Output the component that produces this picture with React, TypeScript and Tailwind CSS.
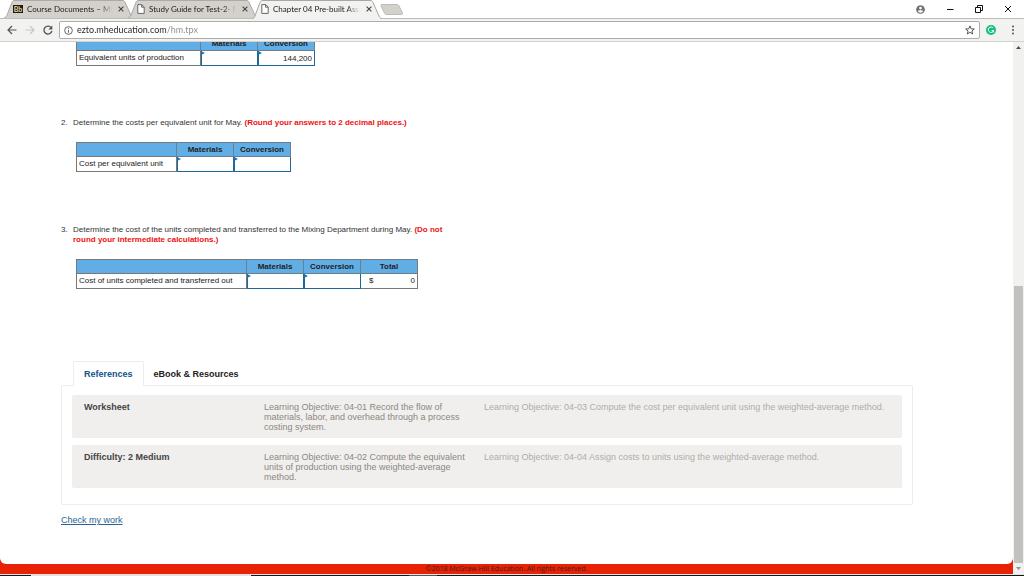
import type { ReactNode } from "react";

type TabProps = { title: string; active?: boolean; logo?: boolean };

function PageIcon() {
  return (
    <svg viewBox="0 0 8 10" className="h-2.5 w-2" fill="#fff" stroke="#666" strokeWidth="1">
      <path d="M.8.6h4l2.4 2.4v6.4H.8z" />
      <path d="M4.6.8v2.4H7" fill="none" />
    </svg>
  );
}

function BlackboardIcon() {
  return (
    <span className="flex h-2 w-2.5 items-center justify-center bg-[#1d1a14] text-[7px] leading-none font-bold text-[#e8d9a8]">
      Bb
    </span>
  );
}

function BrowserTab({ title, active, logo }: TabProps) {
  return (
    <div className={active ? "relative z-10 -mb-px h-[19px] w-[130px]" : "relative h-[18px] w-[130px]"}>
      <svg viewBox="0 0 130 19" preserveAspectRatio="none" className="absolute inset-0 h-full w-full">
        <path
          d="M0 19C2 18.500 2.500 17 3 16L8 2.500C8.500 1 9 .5 11 .5H118C120 .5 120.500 1 121 2.500L127 16C127.500 17 128 18.500 130 19"
          fill={active ? "#f2f2f1" : "#d4d0cb"}
          stroke="#a9a7a4"
        />
      </svg>
      <div className="relative flex h-[18px] items-center gap-1 pr-2 pl-[9px]">
        {logo ? <BlackboardIcon /> : <PageIcon />}
        <button
          type="button"
          className="min-w-0 flex-1 overflow-hidden text-left whitespace-nowrap text-[#222] [mask-image:linear-gradient(90deg,#000_85%,transparent)]"
        >
          {title}
        </button>
        <button type="button" aria-label="Close tab" className="flex w-2.5 justify-center">
          <svg viewBox="0 0 6 6" className="h-1.5 w-1.5" stroke="#444" strokeWidth="1.1">
            <path d="M.6.6l4.8 4.8M5.4.6L.6 5.4" />
          </svg>
        </button>
      </div>
    </div>
  );
}

function TitleBar() {
  return (
    <header className="flex h-[19px] shrink-0 items-center justify-between border-b border-[#bdbcba] bg-white">
      <div className="flex items-end self-stretch -space-x-1.5 pl-1">
        <BrowserTab title="Course Documents – MH" logo />
        <BrowserTab title="Study Guide for Test-2- M" />
        <BrowserTab title="Chapter 04 Pre-built Assi" active />
        <button type="button" aria-label="New tab" className="self-center pl-1">
          <svg viewBox="0 0 23 11" className="h-[11px] w-[23px]">
            <path d="M2 .5H17c1 0 1.500.5 2 1.500L22.500 9c.3 1 0 1.500-1 1.500H7c-1.500 0-2-.5-2.500-1.500L1 2C.7 1 1 .5 2 .5z" fill="#d4d0cb" stroke="#bebbb7" />
          </svg>
        </button>
      </div>
      <div className="flex items-center gap-[21px] pr-3">
        <button type="button" aria-label="Profile">
          <svg viewBox="0 0 10 10" className="h-[9px] w-[9px]">
            <circle cx="5" cy="5" r="4.800" fill="#707070" />
            <circle cx="5" cy="3.400" r="1.500" fill="#fff" />
            <path d="M2 7c.4-1.500 5.600-1.500 6 0-1.400 2-4.600 2-6 0z" fill="#fff" />
          </svg>
        </button>
        <button type="button" aria-label="Minimize">
          <svg viewBox="0 0 8 8" className="h-2 w-2" fill="none" stroke="#111">
            <path d="M1 4.500h6.500" />
          </svg>
        </button>
        <button type="button" aria-label="Restore">
          <svg viewBox="0 0 8 8" className="h-2 w-2" fill="none" stroke="#111">
            <path d="M.5 2.500h5v5h-5zM2.500 2.500V.5h5v5H6" />
          </svg>
        </button>
        <button type="button" aria-label="Close">
          <svg viewBox="0 0 8 8" className="h-2 w-2" fill="none" stroke="#111">
            <path d="M1 1l6 6M7 1L1 7" />
          </svg>
        </button>
      </div>
    </header>
  );
}

function Toolbar() {
  return (
    <nav className="flex h-[23px] shrink-0 items-center border-b border-[#d3d2d1] bg-[#f2f2f1] pr-2 pl-[7px]">
      <div className="flex w-[52px] items-center gap-2">
        <button type="button" aria-label="Back">
          <svg viewBox="0 0 10 10" className="h-2.5 w-2.5" fill="none" stroke="#555" strokeWidth="1.200">
            <path d="M9.500 5H1M5 1L1 5l4 4" />
          </svg>
        </button>
        <button type="button" aria-label="Forward">
          <svg viewBox="0 0 10 10" className="h-2.5 w-2.5" fill="none" stroke="#c8c8c8" strokeWidth="1.200">
            <path d="M.5 5H9M5 1l4 4-4 4" />
          </svg>
        </button>
        <button type="button" aria-label="Reload">
          <svg viewBox="0 0 10 10" className="h-2.5 w-2.5" fill="none" stroke="#555" strokeWidth="1.300">
            <path d="M8.200 2.600A4 4 0 1 0 8.900 6" />
            <path d="M9.300.5v4H5.400z" fill="#555" stroke="none" />
          </svg>
        </button>
      </div>
      <div className="flex h-[18px] min-w-0 flex-1 items-center gap-1 rounded-xs border border-[#adadad] bg-white px-1">
        <svg viewBox="0 0 10 10" className="h-[9px] w-[9px]" fill="none" stroke="#555">
          <circle cx="5" cy="5" r="4.300" />
          <path d="M5 4.400V7.600M5 2.300v1.100" />
        </svg>
        <input
          aria-label="Address"
          defaultValue="ezto.mheducation.com/hm.tpx"
          className="min-w-0 flex-1 bg-[linear-gradient(90deg,#222_90px,#8a8a8a_90px)] bg-clip-text text-[9px] text-transparent outline-none"
        />
        <button type="button" aria-label="Bookmark">
          <svg viewBox="0 0 10 10" className="h-2.5 w-2.5" fill="none" stroke="#444" strokeWidth=".9">
            <path d="M5 .9l1.200 2.900 3.100.2-2.400 2 .8 3L5 7.300 2.300 9l.8-3-2.400-2 3.100-.2z" />
          </svg>
        </button>
      </div>
      <div className="flex items-center gap-3.5 pl-1.5">
        <button type="button" aria-label="Grammar check">
          <svg viewBox="0 0 10 10" className="h-2.5 w-2.5" fill="none" stroke="#fff" strokeWidth="1">
            <circle cx="5" cy="5" r="5" fill="#10bf7a" stroke="none" />
            <path d="M7.200 3.200A2.700 2.700 0 1 0 7.600 5.500M5.600 5.500H7.600V7.500" />
          </svg>
        </button>
        <button type="button" aria-label="Menu">
          <svg viewBox="0 0 6 10" className="h-2.5 w-1.5" fill="#555">
            <circle cx="3" cy="1.500" r="1" />
            <circle cx="3" cy="5" r="1" />
            <circle cx="3" cy="8.500" r="1" />
          </svg>
        </button>
      </div>
    </nav>
  );
}

type SheetProps = { label: string; labelWidth: string; values?: string[]; total?: string; id: string };

function Sheet({ label, labelWidth, values = ["", ""], total, id }: SheetProps) {
  const columns = ["Materials", "Conversion"];
  return (
    <table className="ml-[15px] table-fixed border-collapse self-start border border-[#777] text-[8px] leading-[10px] text-[#222]">
      <thead>
        <tr className="h-3.5 bg-[#61aee6]">
          <td className={labelWidth} />
          {columns.map((c) => (
            <th key={c} scope="col" className="w-[57px] border border-[#6c7f8c] p-0 font-bold">
              {c}
            </th>
          ))}
          {total !== undefined && (
            <th scope="col" className="w-[57px] border border-[#6c7f8c] p-0 font-bold">
              Total
            </th>
          )}
        </tr>
      </thead>
      <tbody>
        <tr className="h-[15px]">
          <th scope="row" className="border border-[#777] p-0 pl-0.5 text-left font-normal whitespace-nowrap">
            {label}
          </th>
          {columns.map((c, i) => (
            <td key={c} className="relative border border-[#1c6a99] p-0">
              <input
                aria-label={`${label}, ${c}`}
                id={`${id}-${i}`}
                defaultValue={values[i]}
                className="block h-3.5 w-full border-l border-[#1c6a99] bg-transparent pr-0.5 text-right outline-none"
              />
              <span className="absolute top-0 left-0 border-y-2 border-l-4 border-y-transparent border-l-[#1474b8]" />
            </td>
          ))}
          {total !== undefined && (
            <td className="border border-[#777] p-0">
              <div className="flex justify-between pr-0.5 pl-2">
                <span>$</span>
                <span>{total}</span>
              </div>
            </td>
          )}
        </tr>
      </tbody>
    </table>
  );
}

function Question({ n, children, note }: { n: number; children: ReactNode; note: string }) {
  return (
    <div className="flex text-[8px] leading-[10px] text-[#333]">
      <span className="w-3 shrink-0">{n}.</span>
      <p className="max-w-[392px]">
        {children} <strong className="text-[#f01010]">{note}</strong>
      </p>
    </div>
  );
}

function Reference({ title, first, second }: { title: string; first: string; second: string }) {
  return (
    <div className="flex h-[43px] rounded-xs bg-[#f0efee] px-3 pt-[7px] text-[9px] leading-[10px]">
      <h3 className="w-[180px] shrink-0 font-bold text-[#444]">{title}</h3>
      <p className="w-[220px] shrink-0 pr-4 text-[#8c8781]">{first}</p>
      <p className="text-[#b0aca6]">{second}</p>
    </div>
  );
}

function ScrollBar() {
  return (
    <div className="flex w-[11px] shrink-0 flex-col items-center bg-[#f1f1f0]">
      <svg viewBox="0 0 11 11" className="h-[11px] w-[11px]" fill="#505050">
        <path d="M5.500 4L8 7H3z" />
      </svg>
      <div className="flex-[233]" />
      <div className="w-[9px] flex-[278] bg-[#c1c1c0]" />
      <svg viewBox="0 0 11 11" className="h-[11px] w-[11px]" fill="#909090">
        <path d="M5.500 7L8 4H3z" />
      </svg>
    </div>
  );
}

export default function App() {
  return (
    <div className="flex h-screen flex-col overflow-hidden bg-white font-[Lato,sans-serif] text-[8px] leading-[12px]">
      <TitleBar />
      <Toolbar />
      <div className="flex min-h-0 flex-1">
        <div className="flex min-w-0 flex-1 flex-col justify-end overflow-hidden bg-[#e82204] font-['Liberation_Sans',sans-serif]">
          <main className="flex shrink-0 flex-col rounded-b-md bg-white pr-[100px] pb-[39px] pl-[61px]">
            <Sheet id="units" label="Equivalent units of production" labelWidth="w-[124px]" values={["", "144,200"]} />
            <section className="flex flex-col gap-3.5 pt-[52px]">
              <Question n={2} note="(Round your answers to 2 decimal places.)">
                Determine the costs per equivalent unit for May.
              </Question>
              <Sheet id="cost" label="Cost per equivalent unit" labelWidth="w-[100px]" />
            </section>
            <section className="flex flex-col gap-3.5 pt-[53px]">
              <Question n={3} note="(Do not round your intermediate calculations.)">
                Determine the cost of the units completed and transferred to the Mixing Department during May.
              </Question>
              <Sheet id="transfer" label="Cost of units completed and transferred out" labelWidth="w-[170px]" total="0" />
            </section>
            <section className="pt-[72px]">
              <div className="flex pl-3 text-[9px] leading-[10px] font-bold">
                <button type="button" className="-mb-px h-[25px] rounded-t-xs border border-b-0 border-[#ededed] bg-white px-2.5 text-[#10548a]">
                  References
                </button>
                <button type="button" className="-mb-px h-[25px] px-2.5 text-[#222]">
                  eBook &amp; Resources
                </button>
              </div>
              <div className="flex flex-col gap-[7px] rounded-xs border border-[#ededed] px-2.5 pt-[9px] pb-4">
                <Reference
                  title="Worksheet"
                  first="Learning Objective: 04-01 Record the flow of materials, labor, and overhead through a process costing system."
                  second="Learning Objective: 04-03 Compute the cost per equivalent unit using the weighted-average method."
                />
                <Reference
                  title="Difficulty: 2 Medium"
                  first="Learning Objective: 04-02 Compute the equivalent units of production using the weighted-average method."
                  second="Learning Objective: 04-04 Assign costs to units using the weighted-average method."
                />
              </div>
            </section>
            <a href="#check" className="mt-2.5 self-start text-[9px] leading-[10px] text-[#2a6496] underline">
              Check my work
            </a>
          </main>
          <footer className="h-2.5 shrink-0 text-center font-['Open_Sans',sans-serif] text-[7px] leading-[10px] font-medium text-[#40231c]">
            ©2018 McGraw-Hill Education. All rights reserved.
          </footer>
        </div>
        <ScrollBar />
      </div>
      <div className="flex h-0.5 shrink-0 border-t border-[#e4e4e4] bg-[#15151c]">
        <div className="ml-[31px] w-[220px] bg-[#ecdcdc]" />
        <div className="ml-[158px] w-7 bg-[#55555c]" />
      </div>
    </div>
  );
}
